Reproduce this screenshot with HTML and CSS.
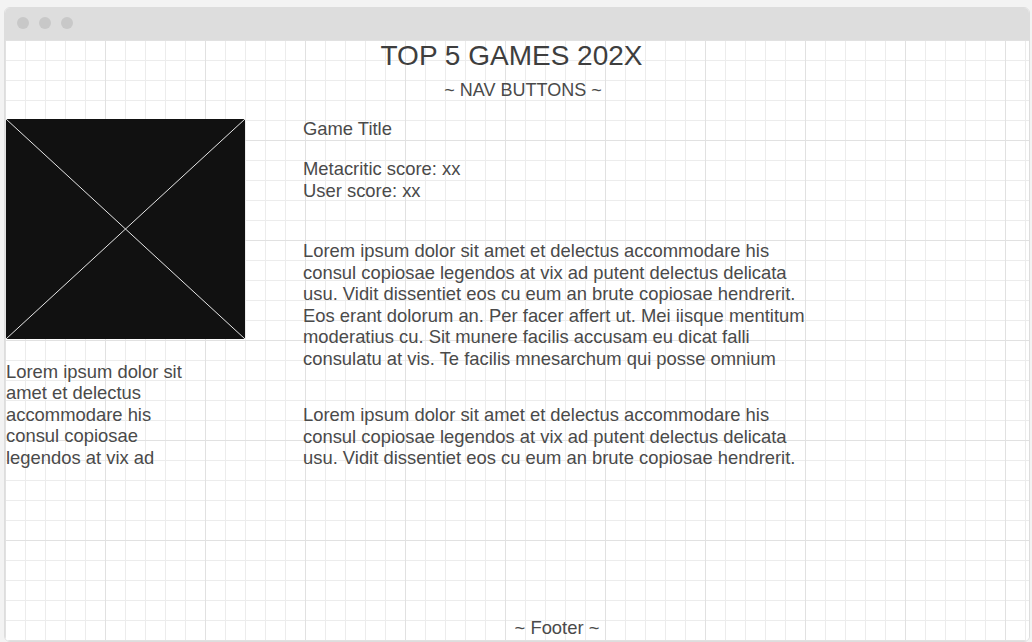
FILE: index.html
```html
<!DOCTYPE html>
<html lang="en">
<head>
<meta charset="utf-8">
<title>Top 5 Games 202X</title>
<link rel="stylesheet" href="styles.css">
</head>
<body>
<div class="window">
  <div class="titlebar">
    <span class="dot"></span><span class="dot"></span><span class="dot"></span>
  </div>
  <div class="canvas">
    <h1 class="page-title">TOP 5 GAMES 202X</h1>
    <div class="nav">~ NAV BUTTONS ~</div>
    <div class="row">
      <div class="left">
        <svg class="thumb" width="239" height="220" viewBox="0 0 239 220">
          <rect x="0" y="0" width="239" height="220" fill="#111111"/>
          <line x1="0" y1="0" x2="239" y2="220" stroke="#e6e6e6" stroke-width="1"/>
          <line x1="239" y1="0" x2="0" y2="220" stroke="#e6e6e6" stroke-width="1"/>
        </svg>
        <p class="side-text">Lorem ipsum dolor sit amet et delectus accommodare his consul copiosae legendos at vix ad</p>
      </div>
      <div class="right">
        <div class="game-title">Game Title</div>
        <div class="scores">Metacritic score: xx<br>User score: xx</div>
        <p class="para first">Lorem ipsum dolor sit amet et delectus accommodare his consul copiosae legendos at vix ad putent delectus delicata usu. Vidit dissentiet eos cu eum an brute copiosae hendrerit. Eos erant dolorum an. Per facer affert ut. Mei iisque mentitum moderatius cu. Sit munere facilis accusam eu dicat falli consulatu at vis. Te facilis mnesarchum qui posse omnium</p>
        <p class="para second">Lorem ipsum dolor sit amet et delectus accommodare his consul copiosae legendos at vix ad putent delectus delicata usu. Vidit dissentiet eos cu eum an brute copiosae hendrerit.</p>
      </div>
    </div>
    <div class="footer">~ Footer ~</div>
  </div>
</div>
</body>
</html>
```

FILE: styles.css
```css
html, body {
  margin: 0;
  padding: 0;
  height: 100%;
}
body {
  background: #f3f3f3;
  font-family: "Liberation Sans", Arial, sans-serif;
  color: #4a4a4a;
  padding: 7px 2px 2px 4px;
  box-sizing: border-box;
}
.window {
  height: 633px;
  border: 1px solid #dddddd;
  border-radius: 6px;
  background: #ffffff;
  display: flex;
  flex-direction: column;
  overflow: hidden;
}
.titlebar {
  height: 32px;
  flex: none;
  background: #dddddd;
  display: flex;
  align-items: flex-start;
  gap: 10px;
  padding: 9px 0 0 12px;
  box-sizing: border-box;
}
.dot {
  width: 12px;
  height: 12px;
  border-radius: 50%;
  background: #c8c8c8;
}
.canvas {
  flex: 1;
  display: flex;
  flex-direction: column;
  background-color: #ffffff;
  background-image:
    linear-gradient(to right, #e1e1e1 1px, transparent 1px),
    linear-gradient(to bottom, #e1e1e1 1px, transparent 1px),
    linear-gradient(to right, #ececec 1px, transparent 1px),
    linear-gradient(to bottom, #ececec 1px, transparent 1px);
  background-size: 100px 100px, 100px 100px, 20px 20px, 20px 20px;
  background-position: 0 0;
}
.page-title {
  margin: 0;
  font-weight: normal;
  font-size: 28px;
  line-height: 32px;
  text-align: center;
  padding-right: 11px;
  color: #3e3e3e;
}
.nav {
  margin-top: 8px;
  font-size: 18px;
  line-height: 21.5px;
  text-align: center;
  padding-left: 12px;
}
.row {
  display: grid;
  grid-template-columns: 241px 512px;
  column-gap: 57px;
  margin-top: 15px;
  font-size: 18.4px;
  line-height: 21.5px;
}
.left {
  padding: 2px 0 0 1px;
}
.thumb {
  display: block;
}
.side-text {
  margin: 22px 0 0 0;
  width: 188px;
}
.right {
  padding-top: 1px;
}
.game-title {
  margin: 0;
}
.scores {
  margin-top: 19px;
}
.para {
  margin: 0;
}
.para.first {
  margin-top: 39px;
}
.para.second {
  margin-top: 35px;
}
.footer {
  margin-top: auto;
  font-size: 18.4px;
  line-height: 21.5px;
  text-align: center;
  padding-left: 80px;
  padding-bottom: 3px;
}
```
